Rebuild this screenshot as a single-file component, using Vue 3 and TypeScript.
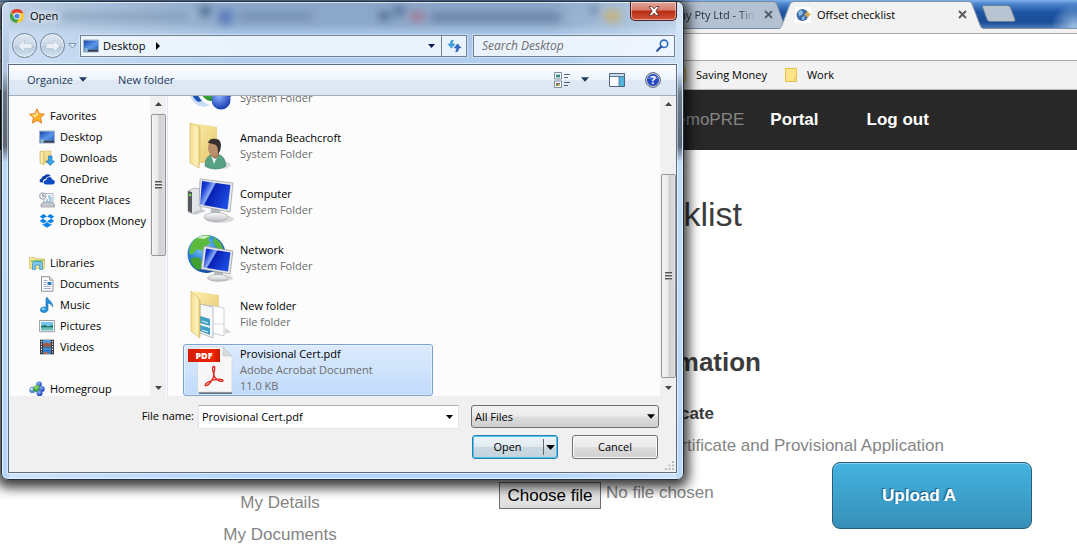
<script setup lang="ts">
import { ref } from 'vue'

interface NavItem { label: string; icon: string; top?: boolean; gap?: boolean }
interface FileItem { name: string; lines: string[]; icon: string; selected?: boolean }

const places: NavItem[] = [
  { label: 'Favorites', icon: 'i-star', top: true },
  { label: 'Desktop', icon: 'i-desktop' },
  { label: 'Downloads', icon: 'i-downloads' },
  { label: 'OneDrive', icon: 'i-onedrive' },
  { label: 'Recent Places', icon: 'i-recent' },
  { label: 'Dropbox (Money', icon: 'i-dropbox' },
  { label: 'Libraries', icon: 'i-libraries', top: true, gap: true },
  { label: 'Documents', icon: 'i-documents' },
  { label: 'Music', icon: 'i-music' },
  { label: 'Pictures', icon: 'i-pictures' },
  { label: 'Videos', icon: 'i-videos' },
  { label: 'Homegroup', icon: 'i-homegroup', top: true, gap: true },
]

const files: FileItem[] = [
  { name: 'Homegroup', lines: ['System Folder'], icon: 'f-homegroup' },
  { name: 'Amanda Beachcroft', lines: ['System Folder'], icon: 'f-user' },
  { name: 'Computer', lines: ['System Folder'], icon: 'f-computer' },
  { name: 'Network', lines: ['System Folder'], icon: 'f-network' },
  { name: 'New folder', lines: ['File folder'], icon: 'f-folder' },
  { name: 'Provisional Cert.pdf', lines: ['Adobe Acrobat Document', '11.0 KB'], icon: 'f-pdf', selected: true },
]

const fileName = ref('Provisional Cert.pdf')
const search = ref('')
</script>

<template>
  <div class="browser">
    <svg class="defs" width="0" height="0" aria-hidden="true">
      <defs>
        <linearGradient id="gFolder" x1="0" y1="0" x2="1" y2="1">
          <stop offset="0" stop-color="#fdf0b0" /><stop offset="1" stop-color="#e3c467" />
        </linearGradient>
        <linearGradient id="gFlap" x1="0" y1="0" x2="1" y2="0">
          <stop offset="0" stop-color="#f3dc8c" /><stop offset="0.7" stop-color="#fdf2bd" /><stop offset="1" stop-color="#e0c26a" />
        </linearGradient>
        <linearGradient id="gScreen" x1="0" y1="0" x2="1" y2="0.5">
          <stop offset="0" stop-color="#0a22c0" /><stop offset="0.2" stop-color="#1436d0" /><stop offset="0.42" stop-color="#8fb0f8" /><stop offset="0.46" stop-color="#0720b4" /><stop offset="1" stop-color="#1c4be0" />
        </linearGradient>
        <radialGradient id="gGlobe" cx="0.4" cy="0.3" r="0.8">
          <stop offset="0" stop-color="#8fd4ff" /><stop offset="0.5" stop-color="#2a7fd8" /><stop offset="1" stop-color="#0b3a93" />
        </radialGradient>
        <radialGradient id="gBlue" cx="0.4" cy="0.3" r="0.7">
          <stop offset="0" stop-color="#8eb2ff" /><stop offset="1" stop-color="#173cae" />
        </radialGradient>
        <radialGradient id="gGreen" cx="0.4" cy="0.3" r="0.7">
          <stop offset="0" stop-color="#9be27a" /><stop offset="1" stop-color="#138a1b" />
        </radialGradient>
        <linearGradient id="gDesk" x1="0" y1="0" x2="1" y2="1">
          <stop offset="0" stop-color="#1946ad" /><stop offset="0.6" stop-color="#5c97e8" /><stop offset="1" stop-color="#2a60c2" />
        </linearGradient>
        <linearGradient id="gGrey" x1="0" y1="0" x2="0" y2="1">
          <stop offset="0" stop-color="#ffffff" /><stop offset="1" stop-color="#b9bcc0" />
        </linearGradient>
        <linearGradient id="gRed" x1="0" y1="0" x2="1" y2="0">
          <stop offset="0" stop-color="#d61c00" /><stop offset="0.8" stop-color="#f02400" /><stop offset="1" stop-color="#c01a00" />
        </linearGradient>
      </defs>

      <symbol id="i-star" viewBox="0 0 16 16"><path d="M8 .8l2.200 4.900 5.300.5-4 3.600 1.200 5.300L8 12.400l-4.700 2.700 1.200-5.300-4-3.600 5.300-.5z" fill="#ffae2a" stroke="#e07a1a" stroke-width=".9" /><path d="M8 3l1.400 3.600-3.700 3L3 7l3.400-.5z" fill="#ffe58c" /></symbol>
      <symbol id="i-desktop" viewBox="0 0 16 16"><path d="M.5 2h15v12H.5z" fill="#dfe7f2" stroke="#8fa0b8" stroke-width=".8" /><path d="M1 2.500h14v9H1z" fill="url(#gDesk)" /><path d="M1 11.500h14v2.200H1z" fill="#2b3a56" /><circle cx="3" cy="12" r="2" fill="#6fc3ff" /><path d="M2 11h1v1H2z" fill="#e8482c" /><path d="M3 12h1v1H3z" fill="#ffcf33" /></symbol>
      <symbol id="i-downloads" viewBox="0 0 16 16"><path d="M4 1h8v12H4z" fill="url(#gFolder)" stroke="#d3b863" stroke-width=".6" /><path d="M1 1l4 1v13l-4-2z" fill="url(#gFlap)" stroke="#c9a94e" stroke-width=".6" /><path d="M9.500 6h3.500v5h2.500l-4.200 4.600L7 11h2.500z" fill="#37a5e8" stroke="#1b6fb4" stroke-width=".7" /></symbol>
      <symbol id="i-onedrive" viewBox="0 0 16 16"><path d="M4 11.500H2.600C1 11.500.4 10.300.7 9.200 1 8.300 1.900 7.700 2.700 7.800 2.500 6 4 4.700 5.400 5 6.300 2.800 10.400 2.200 11.600 5.200 8.600 4.900 7 6.500 6.700 8 4.800 8.100 3.500 9.700 4 11.500z" fill="#0b3fae" /><path d="M7 13.500c-1.800 0-2.600-1.200-2.300-2.500.3-1.200 1.400-1.900 2.600-1.700C7.200 7.300 8.700 6 10.400 6.100c1.600.1 2.700 1.200 2.900 2.600 1.500-.1 2.600.9 2.500 2.400-.1 1.500-1.100 2.400-2.500 2.400z" fill="#0b4cc4" /></symbol>
      <symbol id="i-recent" viewBox="0 0 16 16"><path d="M5 1.500h9v10H5z" fill="#fff" stroke="#9aa5b0" stroke-width=".8" /><path d="M9 4h3M9 6h4M7 8h2M10 8h3M7 10h5" stroke="#58a5cf" stroke-width="1" /><path d="M2 12l2-2h9l2.500 2v3H2z" fill="#c3c7cc" stroke="#9297a0" stroke-width=".7" /><circle cx="3.800" cy="4" r="3.200" fill="#f2f4f7" stroke="#8b95a3" stroke-width=".9" /><path d="M3.800 2v2.200h2" stroke="#4c5666" stroke-width=".8" fill="none" /></symbol>
      <symbol id="i-dropbox" viewBox="0 0 16 16"><path d="M4.700 1L.8 3.600l2.700 2.200L8 3.500zM11.300 1L8 3.500l4.500 2.300 2.700-2.200zM.8 8l3.900 2.600L8 8 3.500 5.800zM15.200 8l-3.900 2.600L8 8l4.500-2.200zM8 8.900l-3.300 2.700-1.400-.9v1L8 14.700l4.700-3v-1l-1.400.9z" fill="#0a82e6" /></symbol>
      <symbol id="i-libraries" viewBox="0 0 16 16"><path d="M.6 2.500h5l1 1.500h8.800v9.500H.6z" fill="url(#gFolder)" stroke="#cda94a" stroke-width=".7" /><path d="M2 5h12v2H2z" fill="#8fcf6a" /><path d="M.6 7h14.800v6.500H.6z" fill="#f7e08c" /><path d="M3.500 14.500V9c0-1.500 1-2.500 2.500-2.500h5c1.500 0 2.500 1 2.500 2.500v5.500h-2.800V10H6.300v4.500z" fill="#7cc8f2" stroke="#3d93cc" stroke-width=".8" /></symbol>
      <symbol id="i-documents" viewBox="0 0 16 16"><path d="M2.500.7h8l3.500 3.500v11H2.500z" fill="#fff" stroke="#7d8590" stroke-width=".9" /><path d="M10.500.7v3.500H14" fill="#e1e5ea" stroke="#7d8590" stroke-width=".7" /><path d="M4.500 4.500h4M4.500 6.500h3M4.500 8.500h3M4.500 10.500h7.500M4.500 12.500h7.500" stroke="#9aa3d4" stroke-width=".9" /><path d="M8.500 6h4v3h-4z" fill="#2a78c2" /></symbol>
      <symbol id="i-music" viewBox="0 0 16 16"><path d="M7 1l1.500-.5C9 3 14 4.500 13.500 10c-.7-2.500-2.500-3.500-4.500-4v6.500c0 1.700-1.800 3-4 3s-3.700-1-3.700-2.600S3 10 5 10c.8 0 1.400.1 2 .4z" fill="#2791dc" stroke="#156bb0" stroke-width=".6" /><ellipse cx="4.500" cy="12" rx="2" ry="1.100" fill="#8bd0fb" /></symbol>
      <symbol id="i-pictures" viewBox="0 0 16 16"><path d="M.6 2.500h14.800v11.200H.6z" fill="#fff" stroke="#8a939e" stroke-width=".9" /><path d="M2 4h12v8.300H2z" fill="#77c2ee" /><path d="M2 8l4-1 3 1.500 5-1.500v2.500H2z" fill="#1c7556" /><path d="M2 9.800h12v2.500H2z" fill="#6cbfb5" /></symbol>
      <symbol id="i-videos" viewBox="0 0 16 16"><path d="M1 .7h14v14.600H1z" fill="#30363c" /><path d="M4 1h8v6.700H4zM4 8.500h8V15H4z" fill="#4c9ce0" /><path d="M4 5l3-2 3 2 2-3v5.500H4z" fill="#9e5b42" /><path d="M4 10l3 1 2-2 3 2v4H9l-3-2-2 2z" fill="#357ac4" /><path d="M5 13h3l2 2H5z" fill="#b06a4e" /><path d="M2.500 2v13M13.500 2v13" stroke="#fff" stroke-width="1.200" stroke-dasharray="1.200 1.400" /></symbol>
      <symbol id="i-homegroup" viewBox="0 0 16 16"><circle cx="3.500" cy="9" r="3.200" fill="#5f8ed0" /><circle cx="10" cy="3.300" r="2.800" fill="url(#gBlue)" /><circle cx="8" cy="7.500" r="3.600" fill="url(#gGreen)" /><circle cx="12.800" cy="8" r="2.900" fill="url(#gBlue)" /><circle cx="10.500" cy="12.300" r="3" fill="url(#gBlue)" /><circle cx="2.600" cy="8" r="1.300" fill="#dfeeff" /></symbol>

      <symbol id="f-homegroup" viewBox="0 0 48 48"><path d="M2 20c0 14 6 20 15 21l6-2C13 36 10 28 10 18z" fill="#c9def4" /><path d="M3 20c1 8 3 12 8 16l4-1c-4-4-6-9-6-15z" fill="#1d52b4" /><circle cx="25" cy="24" r="11" fill="url(#gGreen)" /><circle cx="38" cy="25" r="8" fill="url(#gBlue)" /><circle cx="34" cy="34" r="9.500" fill="url(#gBlue)" /></symbol>
      <symbol id="f-user" viewBox="0 0 48 48"><ellipse cx="34" cy="43" rx="10" ry="4" fill="#000" opacity=".12" /><path d="M5 1l25 4v36H13z" fill="url(#gFolder)" /><path d="M3 1l10 4v27l-1 14L3 41z" fill="url(#gFlap)" stroke="#d2b55d" stroke-width=".6" /><path d="M18 44c0-8 4-12 10-12s10 3 11 12c-5 4-16 4-21 0z" fill="#57a283" stroke="#3b7f64" stroke-width=".6" /><path d="M24 33h7l-4 9z" fill="#eef4f2" /><path d="M24 28h8v6l-4 3-4-3z" fill="#a47a5a" /><ellipse cx="27" cy="26" rx="6" ry="8" fill="#b98f6c" /><path d="M21 21c1-4 4-5 8-4 5 0 6 6 4 12l-2 3c0-4 0-7-2-9-3-1-5-2-8-2z" fill="#35302e" /></symbol>
      <symbol id="f-computer" viewBox="0 0 48 48"><ellipse cx="33" cy="41" rx="14" ry="4" fill="#000" opacity=".13" /><path d="M1 13l6-3 7 1v23l-8 2-5-2z" fill="#e2e4e7" stroke="#94989d" stroke-width=".6" /><path d="M1 13l4 1v21l-4-2z" fill="#55595e" /><circle cx="3" cy="17" r="1.300" fill="#6fe04b" /><path d="M6 34l9-3 4 2-11 4z" fill="#c8ccd2" /><path d="M24 31h9l1 8H23z" fill="#b7bbc0" /><ellipse cx="29" cy="39" rx="12" ry="4.500" fill="url(#gGrey)" stroke="#9b9ea3" stroke-width=".6" /><path d="M13 1l33 4-3 29-31-6z" fill="#e7e9ec" stroke="#989ca2" stroke-width=".7" /><path d="M15 3l28.500 4-3 24.500L13 26.500z" fill="url(#gScreen)" /></symbol>
      <symbol id="f-network" viewBox="0 0 48 48"><ellipse cx="33" cy="44" rx="13" ry="3.500" fill="#000" opacity=".14" /><circle cx="19.500" cy="20" r="19" fill="url(#gGlobe)" /><path d="M7 6c6-5 13-6 17-4l-3 4 3 3-5 3-4 5-5-2-5 6-3-2c0-5 2-9 5-13z" fill="#5cbb3c" /><path d="M4 24l7-1 5 6-3 7-4-1c-4-4-6-7-5-11z" fill="#3fa02f" /><path d="M27 3l7 6 3 8-7-3-4-6z" fill="#57b53b" /><path d="M10 4c5-3 9-3 13-2l-6 3z" fill="#fff" opacity=".7" /><path d="M27 37h9v7h-9z" fill="#b7bbc0" /><ellipse cx="31" cy="44" rx="10" ry="3.300" fill="url(#gGrey)" stroke="#989ca2" stroke-width=".5" /><path d="M17 12l29 5-3 23-29-5z" fill="#e4e6ea" stroke="#8e9298" stroke-width=".7" /><path d="M19 14.500l24.500 4-2.500 19-24.500-4z" fill="url(#gScreen)" /></symbol>
      <symbol id="f-folder" viewBox="0 0 48 48"><path d="M38 44l6-2-6-4z" fill="#000" opacity=".15" /><path d="M6 1l26 4v34H14z" fill="url(#gFolder)" /><path d="M22 15l15 3v28l-15-4z" fill="#fff" stroke="#b9bdc1" stroke-width=".7" /><path d="M24 34h13" stroke="#ccccdd" stroke-width=".8" /><path d="M13 14l13 3v31l-13-5z" fill="#f5f7f9" stroke="#9da3a8" stroke-width=".7" /><path d="M13 26l10 3v7l-10-3zM13 35l10 3v7l-10-4z" fill="#3f9fc4" /><path d="M15 31l6 2M15 40l6 2" stroke="#e9f6fb" stroke-width="1" /><path d="M4 1l9 9v38l-9-7z" fill="url(#gFlap)" stroke="#d2b55d" stroke-width=".6" /></symbol>
      <symbol id="f-pdf" viewBox="0 0 48 48"><path d="M12 45.500h33V48H12z" fill="#4c5560" opacity=".8" /><path d="M10.500 1H36l9 9v36H10.500z" fill="#f7f7f7" stroke="#cfd2d6" stroke-width=".7" /><path d="M36 1v9h9z" fill="#d9dbde" stroke="#bfc2c6" stroke-width=".6" /><path d="M1 3h32v13H1z" fill="url(#gRed)" /><path d="M27 20.500c-2.400 0-1.600 4.500.2 8.200-1.700 5.200-4.500 9.500-7.300 10.700-2.700 1-2.300-1.200.9-3.100 4-2.400 9.300-3.300 13-3 3.300.4 2.700 2.700-.2 2-3.300-1-6.200-4-7-6.600.9-4 1.800-8.100.4-8.200z" fill="none" stroke="#e2231a" stroke-width="1.300" /><text x="17" y="13" text-anchor="middle" font-family="Open Sans, sans-serif" font-weight="800" font-size="9" fill="#fff">PDF</text></symbol>
      <symbol id="caret" viewBox="0 0 7 4"><path d="M0 0h7L3.500 4z" fill="currentColor" /></symbol>
    </svg>

    <div class="tabs">
      <div class="tab tab-old">
        <svg class="tab-shape" viewBox="0 0 786 29" preserveAspectRatio="xMaxYMid slice"><path d="M-9 1.500H773q3 0 4 3l8.500 24H-9z" fill="#b4c1d2" stroke="#77889f" /></svg>
        <span class="tab-title fade">Company Pty Ltd - Tim</span>
        <button class="tab-x" aria-label="Close tab"><svg width="9" height="9" viewBox="0 0 9 9"><path d="M1 1l7 7M8 1l-7 7" stroke="#555d68" stroke-width="1.800" /></svg></button>
      </div>
      <div class="tab tab-on">
        <svg class="tab-shape" viewBox="0 0 206 29"><path d="M0 29.500Q2 27 3 25L11 4q1-2.500 4-2.500H190q2 0 3 2.500l8 21q1.500 4 4 4.500z" fill="#f2f2f2" stroke="#8494a8" /><path d="M1 28.500h203V30H1z" fill="#f2f2f2" /></svg>
        <svg class="fav" width="16" height="16" viewBox="0 0 16 16"><path d="M0 0h16v16H0z" fill="#fff" /><circle cx="7.500" cy="8" r="6" fill="#3b6ba8" /><path d="M3 5l3-2 2 2-1 3-3 1zM7 10l3-1-1 4-2 0z" fill="#8fb9dd" /><path d="M12.500 4.500v6M9.500 7.500h6" stroke="#d8ab4b" stroke-width="2" /></svg>
        <span class="tab-title">Offset checklist</span>
        <button class="tab-x" aria-label="Close tab"><svg width="9" height="9" viewBox="0 0 9 9"><path d="M1 1l7 7M8 1l-7 7" stroke="#5a5a5a" stroke-width="1.800" /></svg></button>
      </div>
      <button class="tab-new" aria-label="New tab"><svg width="34" height="17" viewBox="0 0 34 17"><path d="M1.500.5h24q2 0 3 2l4.500 12q.5 2-1.500 2H8q-2 0-3-2L.7 2.500Q.3.5 1.500.5z" fill="#b9c4d2" stroke="#6d7f99" /></svg></button>
    </div>
    <div class="omnibar"></div>
    <div class="bookmarks">
      <span class="mark"><svg width="12" height="14" viewBox="0 0 12 14"><path d="M.5.500h11v13H.5z" fill="#ffe48a" stroke="#e8bf45" /></svg>Saving Money</span>
      <span class="mark"><svg width="12" height="14" viewBox="0 0 12 14"><path d="M.5.500h11v9.500H9.500v3.500H.5z" fill="#ffe48a" stroke="#e8bf45" /><path d="M9.500 10.500h2v3h-2z" fill="#fff0b8" stroke="#e8bf45" /></svg>Work</span>
    </div>

    <nav class="site-nav">
      <span class="brand">DemoPRE</span>
      <a href="#portal">Portal</a>
      <a href="#logout">Log out</a>
    </nav>

    <div class="page">
      <aside class="side">
        <a href="#details">My Details</a>
        <a href="#documents">My Documents</a>
      </aside>
      <main class="main">
        <h1>Offset checklist</h1>
        <h2>General Information</h2>
        <h3>Provisional Certificate</h3>
        <p>Certificate and Provisional Application</p>
        <div class="upload-row">
          <div class="chooser"><button class="choose">Choose file</button><span>No file chosen</span></div>
          <button class="upload">Upload A</button>
        </div>
      </main>
    </div>

    <section class="dialog" role="dialog" aria-label="Open">
      <svg class="haze" viewBox="0 0 680 64" preserveAspectRatio="xMidYMin slice" aria-hidden="true">
        <defs><filter id="soft" x="-20%" y="-60%" width="140%" height="220%"><feGaussianBlur stdDeviation="4" /></filter></defs>
        <g filter="url(#soft)">
          <path d="M60 11h125v7H60z" fill="#5b7696" opacity=".4" />
          <path d="M196 5h14l-7 12z" fill="#22436e" opacity=".8" />
          <path d="M216 8h14v14h-14z" fill="#4a6db4" opacity=".8" />
          <path d="M238 11h72v7h-72z" fill="#4f6c92" opacity=".5" />
          <path d="M376 10h12v8h-12zM390 5h14l-7 12z" fill="#2d4b75" opacity=".7" />
          <path d="M408 10h14v9h-14z" fill="#b2566a" opacity=".6" />
          <path d="M428 11h130v8H428z" fill="#455f84" opacity=".6" />
          <path d="M586 5h10l-5 10z" fill="#3b5880" opacity=".7" />
          <path d="M602 8h15v12h-15z" fill="#c9b173" opacity=".9" />
        </g>
      </svg>

      <header class="title">
        <svg width="14" height="14" viewBox="0 0 14 14"><circle cx="7" cy="7" r="7" fill="#f6c833" /><path d="M7 7L1 3.300A7 7 0 0 1 13.200 4H7z" fill="#df4234" /><path d="M1 3.300A7 7 0 0 0 6.500 14l3.200-5.500L4 8z" fill="#3ba353" /><circle cx="7" cy="7" r="3.400" fill="#fff" /><circle cx="7" cy="7" r="2.600" fill="#4684e8" /></svg>
        <span>Open</span>
        <button class="close" aria-label="Close"><svg width="12" height="10" viewBox="0 0 12 10"><path d="M1 .6h3L6 2.900 8 .6h3L7.800 5 11 9.400H8L6 7.100 4 9.400H1L4.200 5z" fill="#fff" stroke="#5d2a2a" stroke-width=".8" /></svg></button>
      </header>

      <div class="address-row">
        <div class="history">
          <button class="round" aria-label="Back"><svg width="16" height="14" viewBox="0 0 16 14"><path d="M7.500 1L1 7l6.500 6V9.500H15v-5H7.500z" fill="#e9eff5" stroke="#b7c5d3" stroke-width=".7" /></svg></button>
          <button class="round" aria-label="Forward"><svg width="16" height="14" viewBox="0 0 16 14"><path d="M8.500 1L15 7l-6.500 6V9.500H1v-5h7.500z" fill="#e9eff5" stroke="#b7c5d3" stroke-width=".7" /></svg></button>
          <svg class="recent" width="9" height="6" viewBox="0 0 9 6"><path d="M.8.500h7.400L4.500 5z" fill="#dde8f3" stroke="#7f95ad" /></svg>
        </div>
        <div class="address">
          <svg width="16" height="16"><use href="#i-desktop" /></svg>
          <span>Desktop</span>
          <svg class="crumb" width="4" height="8" viewBox="0 0 4 8"><path d="M0 0v8l4-4z" fill="#000" /></svg>
          <svg class="drop" width="7" height="4"><use href="#caret" /></svg>
          <button class="refresh" aria-label="Refresh"><svg width="15" height="14" viewBox="0 0 15 14"><path d="M6.500 1C4 1 3.200 2.500 3.200 5H.8L4.400 9.200 8 5H5.600C5.600 3.500 5.800 2 6.500 1z" fill="#3fa4e2" stroke="#2374b8" stroke-width=".4" /><path d="M8.500 13c2.500 0 3.300-1.500 3.300-4h2.400L10.600 4.800 7 9h2.400c0 1.500-.2 3-.9 4z" fill="#2f6ac4" stroke="#1d4f9c" stroke-width=".4" /></svg></button>
        </div>
        <label class="search">
          <input v-model="search" type="text" placeholder="Search Desktop" aria-label="Search Desktop" />
          <svg width="13" height="13" viewBox="0 0 13 13"><circle cx="8" cy="4.800" r="3.700" fill="#eef7ff" stroke="#2f6fc0" stroke-width="1.600" /><path d="M5.300 7.600L1.200 11.800" stroke="#2b55a0" stroke-width="2.200" stroke-linecap="round" /></svg>
        </label>
      </div>

      <div class="client">
        <div class="toolbar">
          <button class="organize">Organize <svg width="8" height="5"><use href="#caret" /></svg></button>
          <button>New folder</button>
          <div class="tools">
            <button class="view" aria-label="Change view"><svg width="17" height="16" viewBox="0 0 17 16"><path d="M.5.500h7v6.500h-7zM.5 9h7v6.500h-7z" fill="#fff" stroke="#7d8b9c" /><path d="M2 2.500h4v3H2z" fill="#3a8f8a" /><path d="M2 11h2v1.500H2z" fill="#d33" /><path d="M4 11h2v1.500H4z" fill="#3a68d0" /><path d="M2 12.500h2V14H2z" fill="#2c9a3c" /><path d="M4 12.500h2V14H4z" fill="#e5b429" /><path d="M10 2.500h6M10 5.500h4M10 10.500h6M10 13.500h4" stroke="#55657c" /></svg><svg width="8" height="5"><use href="#caret" /></svg></button>
            <button aria-label="Preview pane"><svg width="16" height="14" viewBox="0 0 16 14"><path d="M.5.500h15v13H.5z" fill="#fff" stroke="#4e6682" /><path d="M1 1h14v2H1z" fill="#c9dbeb" /><path d="M10 3h5v10h-5z" fill="#54b5dc" /><path d="M10 3v10M1 3.500h14" stroke="#5a7d9c" /></svg></button>
            <button aria-label="Help"><svg width="16" height="16" viewBox="0 0 16 16"><circle cx="8" cy="8" r="7.400" fill="#c8cfda" stroke="#5d6675" /><circle cx="8" cy="8" r="6" fill="#2449c0" /><path d="M2.300 7a6 5 0 0 1 11.400 0z" fill="#6f93e8" opacity=".6" /><text x="8" y="12" text-anchor="middle" font-family="Open Sans, sans-serif" font-weight="700" font-size="11" fill="#fff">?</text></svg></button>
          </div>
        </div>

        <div class="panes">
          <div class="places">
            <ul>
              <li v-for="p in places" :key="p.label" :class="{ top: p.top, gap: p.gap }">
                <svg width="16" height="16"><use :href="'#' + p.icon" /></svg><span>{{ p.label }}</span>
              </li>
            </ul>
          </div>
          <div class="bar bar-places" aria-hidden="true">
            <svg class="arrow up" width="7" height="4"><use href="#caret" /></svg>
            <i class="thumb"><b></b></i>
            <i class="rest"></i>
            <svg class="arrow" width="7" height="4"><use href="#caret" /></svg>
          </div>
          <div class="files">
            <div v-for="f in files" :key="f.name" class="file" :class="{ selected: f.selected }">
              <svg width="48" height="48"><use :href="'#' + f.icon" /></svg>
              <div><strong>{{ f.name }}</strong><span v-for="l in f.lines" :key="l">{{ l }}</span></div>
            </div>
          </div>
          <div class="bar bar-files" aria-hidden="true">
            <svg class="arrow up" width="7" height="4"><use href="#caret" /></svg>
            <i class="rest"></i>
            <i class="thumb"><b></b></i>
            <svg class="arrow" width="7" height="4"><use href="#caret" /></svg>
          </div>
        </div>

        <footer class="foot">
          <label for="fname">File name:</label>
          <div class="combo">
            <input id="fname" v-model="fileName" type="text" />
            <svg width="7" height="4"><use href="#caret" /></svg>
          </div>
          <div class="pick">
            <select aria-label="File type"><option>All Files</option></select>
            <svg width="8" height="5"><use href="#caret" /></svg>
          </div>
          <div class="actions">
            <div class="split"><button class="open">Open</button><button class="more" aria-label="Open options"><svg width="9" height="5"><use href="#caret" /></svg></button></div>
            <button class="cancel">Cancel</button>
          </div>
          <svg class="grip" width="9" height="9" viewBox="0 0 9 9"><path d="M7 0h2v2H7zM7 3.500h2v2H7zM7 7h2v2H7zM3.500 3.500h2v2h-2zM3.500 7h2v2h-2zM0 7h2v2H0z" fill="#bcbcbc" /></svg>
        </footer>
      </div>
    </section>
  </div>
</template>

<style>
body { margin: 0; background: #fff; }
</style>

<style scoped>
* { box-sizing: border-box; }
.browser {
  position: relative;
  min-height: 100vh;
  overflow: hidden;
  font: 11px/16px "Open Sans", "Noto Sans", sans-serif;
  color: #000;
}
.defs { position: absolute; }
button { font: inherit; color: inherit; border: 0; padding: 0; background: none; }
svg { display: block; flex: none; }

/* Browser chrome */
.tabs {
  display: flex;
  height: 29px;
  background: radial-gradient(circle at 1075px 27px, #9cc0e6 0, rgba(120, 165, 215, 0) 24px), linear-gradient(#7fb0ea 0, #4c84cc 4px, #1d55a3 12px, #1a4c96 22px, #4a79b5 28px);
  border-bottom: 1px solid #8494a8;
}
.tab { position: relative; display: flex; align-items: center; height: 29px; flex: none; }
.tab-shape { position: absolute; left: 0; top: 0; width: 100%; height: 29px; }
.tab-old { width: 786px; justify-content: flex-end; padding-right: 13px; }
.tab-on { width: 206px; margin-left: -7px; padding: 0 18px 0 16px; }
.tab-title { position: relative; white-space: nowrap; margin-left: 6px; }
.tab-old .tab-title { margin-right: 6px; color: #2a3340; }
.fade { mask-image: linear-gradient(90deg, #000 84%, transparent 97%); }
.tab-x { position: relative; margin-left: auto; }
.tab-old .tab-x { margin-left: 0; }
.fav { position: relative; }
.tab-new { margin: -1px 0 0 -3px; }
.omnibar { height: 32px; background: #fff; border-top: 4px solid #f2f2f2; border-bottom: 1px solid #a8a8a8; box-shadow: inset 0 1px #a8a8a8; }
.bookmarks { display: flex; align-items: center; gap: 18px; height: 29px; padding-left: 674px; background: #f2f2f2; border-bottom: 1px solid #b3bcb3; }
.mark { display: flex; align-items: center; gap: 10px; }

/* Site */
.site-nav {
  display: flex;
  align-items: center;
  height: 60px;
  padding-left: 664px;
  background: #282828;
  font: bold 17px/20px "Liberation Sans", Arial, sans-serif;
}
.site-nav a { color: #fff; text-decoration: none; margin-right: 48px; }
.brand { color: #858585; font-weight: normal; margin-right: 26px; }
.page { display: grid; grid-template-columns: 499px 1fr; font: 17px/32px "Liberation Sans", Arial, sans-serif; color: #858585; }
.side { display: flex; flex-direction: column; align-items: center; padding: 337px 0 0 61px; }
.side a { color: #858585; text-decoration: none; }
h1, h2, h3, p { margin: 0; text-align: right; color: #3c3c3c; }
h1 { width: 243px; margin-top: 44px; font: 34px/40px "Liberation Sans", Arial, sans-serif; }
h2 { width: 262px; margin-top: 112px; font: bold 26px/32px "Liberation Sans", Arial, sans-serif; }
h3 { width: 215px; margin-top: 20px; font: bold 17px/32px "Liberation Sans", Arial, sans-serif; }
p { width: 445px; color: #858585; }
.upload-row { display: grid; grid-template-columns: 333px 200px; }
.chooser { display: flex; gap: 5px; padding-top: 20px; }
.chooser span { line-height: 22px; }
.choose { width: 102px; height: 27px; line-height: 24px; color: #000; border: 1px solid #6f6f6f; background: linear-gradient(#f3f3f3, #dcdcdc); }
.upload {
  height: 67px;
  padding-right: 26px;
  font: bold 17px/20px "Liberation Sans", Arial, sans-serif;
  color: #fff;
  text-shadow: -1px -1px 1px #1b5878;
  border: 1px solid #215d78;
  border-radius: 8px;
  background: linear-gradient(#44b2e0, #3690b8);
  box-shadow: inset 0 1px 1px #8fd3f0;
}

/* Dialog window */
.dialog {
  position: absolute;
  left: 1px;
  top: 1px;
  width: 683px;
  padding: 0 6px 6px;
  border: 1px solid #24303e;
  border-radius: 7px;
  background:
    linear-gradient(#d3e3f5 0, #cfe4fa 70px, #6f7d90 92px, #59677b 144px, #c4defa 160px, #b8d8f8 100%) right / 7px 100% no-repeat,
    linear-gradient(#c9dbef 0, #b0c6df 70px, #677383 92px, #5d6775 144px, #bcd9f8 160px, #b5d6fa 100%) left / 7px 100% no-repeat,
    linear-gradient(90deg, rgba(225, 236, 248, .6) 0, rgba(160, 185, 215, 0) 35%, rgba(160, 185, 215, 0) 80%, rgba(225, 238, 252, .6) 100%),
    linear-gradient(#8aa6c8 0, #8eaacb 22px, #aac6e6 32px, #b3d0f0 66px, #b5d6fa 100%);
  box-shadow: inset 0 0 0 1px rgba(240, 248, 255, .8), 0 3px 12px 5px rgba(0, 0, 0, .75);
}
.haze { position: absolute; left: 0; top: 0; width: 100%; height: 64px; }
.title { position: relative; display: flex; align-items: center; gap: 6px; height: 28px; padding-left: 2px; }
.title span { text-shadow: 0 0 6px #fff, 0 0 6px #fff; }
.close {
  display: flex;
  justify-content: center;
  align-items: center;
  align-self: flex-start;
  width: 47px;
  height: 19px;
  margin-left: auto;
  border: 1px solid #4a2228;
  border-top: 0;
  border-radius: 0 0 5px 5px;
  background: linear-gradient(#e3a599 0, #d37c6c 45%, #b92c14 50%, #cf5638 100%);
  box-shadow: inset 0 0 0 1px rgba(255, 255, 255, .45);
}
.address-row { position: relative; display: flex; align-items: center; height: 34px; padding: 0 2px 3px; }
.history { display: flex; align-items: center; gap: 3px; width: 70px; padding-left: 2px; }
.round {
  display: flex;
  align-items: center;
  justify-content: center;
  width: 25px;
  height: 25px;
  border: 1px solid #6e8195;
  border-radius: 50%;
  background: linear-gradient(#dde8f2 0, #c8d6e4 50%, #b3c6da 52%, #d2e3f3 100%);
  box-shadow: inset 0 0 0 1px rgba(255, 255, 255, .6);
}
.address, .search {
  display: flex;
  align-items: center;
  height: 22px;
  border: 1px solid #6f8093;
  background: rgba(243, 248, 254, .88);
  box-shadow: 0 0 0 1px rgba(255, 255, 255, .35);
}
.address { flex: 1; padding-left: 2px; }
.address span { margin: 0 11px 0 4px; }
.drop { margin-left: auto; margin-right: 6px; color: #0c1a5c; }
.refresh { display: flex; align-items: center; justify-content: center; width: 25px; height: 20px; border-left: 1px solid #6f8093; }
.search { width: 202px; margin-left: 6px; padding-right: 5px; }
.search input { flex: 1; min-width: 0; border: 0; outline: 0; padding: 0 8px; background: none; font: inherit; font-size: 12px; }
.search input::placeholder { color: #6d6d6d; font-style: italic; opacity: 1; }
.client { position: relative; border: 1px solid #5c6d82; background: #f0f0f0; box-shadow: 0 0 0 1px rgba(255, 255, 255, .5); }
.toolbar {
  display: flex;
  align-items: center;
  gap: 31px;
  height: 31px;
  padding: 0 15px 1px 18px;
  color: #1e395b;
  background: linear-gradient(#fdfeff 0, #edf4fc 48%, #dfe8f5 52%, #dce7f4 100%);
  border-bottom: 1px solid #a0afc3;
}
.toolbar button { display: flex; align-items: center; gap: 6px; }
.toolbar .tools { display: flex; align-items: center; gap: 20px; margin-left: auto; }
.tools .view { gap: 10px; }
.panes { display: flex; height: 300px; background: #fcfcfc; }
.places { width: 141px; overflow: hidden; }
.places ul { margin: 0; padding: 9px 0 0 19px; list-style: none; }
.places li { display: flex; align-items: center; gap: 5px; height: 21px; padding-left: 11px; white-space: nowrap; }
.places li.top { padding-left: 1px; }
.places li.gap { margin-top: 21px; }
.bar { display: flex; flex-direction: column; align-items: center; width: 16px; background: #f0f0f0; color: #444; padding: 6px 0; }
.bar-places { width: 17px; border-right: 1px solid #fcfcfc; }
.up { transform: rotate(180deg); margin-bottom: 8px; }
.rest { flex: 1; }
.thumb {
  display: flex;
  align-items: center;
  justify-content: center;
  width: 15px;
  border: 1px solid #979797;
  border-radius: 2px;
  background: linear-gradient(90deg, #f5f5f5 0, #e9e9eb 45%, #cfcfd2 55%, #dcdcde 100%);
}
.bar-places .thumb { height: 142px; }
.bar-files .thumb { height: 204px; margin-bottom: 8px; }
.thumb b { width: 7px; height: 8px; background: repeating-linear-gradient(#555 0, #555 1px, #f4f4f4 2px, #e3e3e3 3px); }
.files { display: flex; flex-direction: column; justify-content: flex-end; gap: 4px; flex: 1; overflow: hidden; padding-left: 15px; border-left: 1px solid #dce7f3; }
.file { display: flex; align-items: center; gap: 5px; flex: none; width: 250px; height: 52px; padding-left: 3px; border: 1px solid transparent; border-radius: 3px; }
.file.selected { border-color: #7da2ce; background: linear-gradient(#dcebfc, #c1dbfc); box-shadow: inset 0 0 0 1px rgba(255, 255, 255, .4); }
.file strong, .file span { display: block; font-weight: normal; line-height: 16px; }
.file span { color: #6d6d6d; }
.foot {
  position: relative;
  display: grid;
  grid-template-columns: 185px 265px 200px;
  align-content: start;
  height: 76px;
  padding-top: 9px;
}
.foot label { padding: 3px 0 0; text-align: right; }
.combo { display: flex; align-items: center; height: 24px; margin-left: 4px; padding-right: 5px; border: 1px solid #e2e3ea; border-top-color: #abadb3; background: #fff; }
.combo input { flex: 1; min-width: 0; border: 0; outline: 0; padding: 0 3px; font: inherit; background: none; }
.pick { position: relative; height: 23px; margin-left: 12px; }
.pick svg { position: absolute; right: 4px; top: 9px; pointer-events: none; }
select { appearance: none; width: 100%; height: 100%; padding: 0 3px; font: inherit; color: #000; border: 1px solid #707070; border-radius: 3px; background: linear-gradient(#f2f2f2 0, #ebebeb 48%, #dddddd 52%, #cfcfcf 100%); }
.actions { grid-column: 3; display: flex; gap: 14px; margin: 6px 0 0 13px; }
.split { display: flex; width: 86px; height: 24px; border: 1px solid #2f7cab; border-radius: 3px; background: linear-gradient(#eef5f9 0, #dfeaf0 48%, #cad9e1 52%, #c4d3dc 100%); box-shadow: inset 0 0 0 1px #43c8f2; }
.open { flex: 1; }
.more { display: flex; align-items: center; justify-content: center; width: 13px; margin: 3px 1px; border-left: 1px solid #666; }
.cancel { width: 86px; height: 24px; border: 1px solid #707070; border-radius: 3px; background: linear-gradient(#f2f2f2 0, #ebebeb 48%, #dddddd 52%, #cfcfcf 100%); box-shadow: inset 0 0 0 1px #fafafa; }
.grip { position: absolute; right: 2px; bottom: 2px; }
</style>
